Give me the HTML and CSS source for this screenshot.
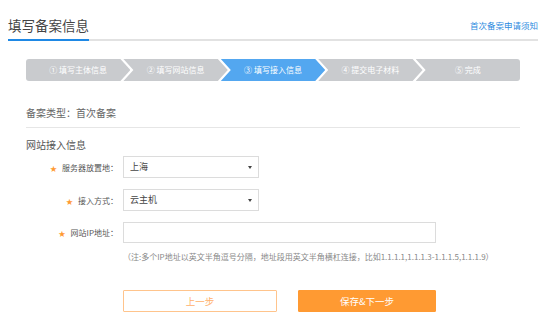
FILE: index.html
```html
<!DOCTYPE html>
<html lang="zh-CN">
<head>
    <meta charset="UTF-8">
    <title>填写备案信息</title>
    <link rel="stylesheet" href="styles.css">
</head>
<body>
    <div class="page">
        <header class="header">
            <h1>填写备案信息</h1>
            <a href="#" class="notice-link">首次备案申请须知</a>
        </header>

        <div class="steps">
            <div class="step">① 填写主体信息</div>
            <div class="step">② 填写网站信息</div>
            <div class="step active">③ 填写接入信息</div>
            <div class="step">④ 提交电子材料</div>
            <div class="step">⑤ 完成</div>
        </div>

        <div class="content">
            <div class="record-type">备案类型：首次备案</div>

            <div class="section-title">网站接入信息</div>

            <div class="form">
                <div class="form-row">
                    <label class="form-label"><span class="star">★</span>服务器放置地：</label>
                    <div class="select">上海</div>
                </div>
                <div class="form-row">
                    <label class="form-label"><span class="star">★</span>接入方式：</label>
                    <div class="select">云主机</div>
                </div>
                <div class="form-row">
                    <label class="form-label"><span class="star">★</span>网站IP地址：</label>
                    <input type="text" class="text-input">
                </div>
                <p class="form-tip">（注:多个IP地址以英文半角逗号分隔，地址段用英文半角横杠连接，比如1.1.1.1,1.1.1.3-1.1.1.5,1.1.1.9）</p>
            </div>

            <div class="actions">
                <button class="btn btn-prev">上一步</button>
                <button class="btn btn-next">保存&amp;下一步</button>
            </div>
        </div>
    </div>
</body>
</html>
```

FILE: styles.css
```css
:root {
    --blue: #1e88e5;
    --step-gray: #c9cbce;
    --step-blue: #53a7f0;
    --orange: #ff9a32;
    --text: #444;
    --muted: #666;
    --border: #dcdcdc;
}

body {
    margin: 0;
    font-family: "Noto Sans CJK SC", "Microsoft YaHei", sans-serif;
    color: var(--text);
    background: #fff;
}

.page {
    width: 553px;
}

.header {
    display: flex;
    justify-content: space-between;
    align-items: flex-end;
    margin: 0 15px 0 8px;
    padding-top: 15px;
    border-bottom: 2px solid #e2e2e2;
}

.header h1 {
    margin: 0 0 -2px 0;
    font-size: 13.5px;
    font-weight: normal;
    line-height: 20px;
    padding: 0 0 4px 0;
    border-bottom: 2px solid var(--blue);
    color: #444;
}

.notice-link {
    font-size: 8.5px;
    line-height: 12px;
    color: #2d8be0;
    text-decoration: none;
    padding-bottom: 8px;
}

.steps {
    display: flex;
    height: 22px;
    margin: 18px 33px 0 26px;
    border-radius: 3px;
    overflow: hidden;
}

.step {
    flex: 1;
    margin-left: -7px;
    background: var(--step-gray);
    color: #fff;
    font-size: 8px;
    line-height: 22px;
    text-align: center;
    clip-path: polygon(0 0, calc(100% - 10px) 0, 100% 50%, calc(100% - 10px) 100%, 0 100%, 10px 50%);
}

.step:first-child {
    margin-left: 0;
    clip-path: polygon(0 0, calc(100% - 10px) 0, 100% 50%, calc(100% - 10px) 100%, 0 100%);
}

.step:last-child {
    clip-path: polygon(0 0, 100% 0, 100% 100%, 0 100%, 10px 50%);
}

.step.active {
    background: var(--step-blue);
}

.content {
    margin: 0 33px 0 26px;
}

.record-type {
    margin-top: 25px;
    font-size: 10px;
    line-height: 14px;
    color: var(--muted);
    padding-bottom: 7px;
    border-bottom: 1px solid #e6e6e6;
}

.section-title {
    margin-top: 10px;
    font-size: 10px;
    line-height: 14px;
    color: #555;
}

.form {
    margin-top: 4px;
    display: flex;
    flex-direction: column;
    gap: 11px;
}

.form-row {
    display: flex;
    align-items: center;
    gap: 5px;
}

.form-label {
    width: 92px;
    text-align: right;
    font-size: 8px;
    color: #555;
}

.star {
    color: #ff9a32;
    font-size: 7px;
    margin-right: 5px;
}

.select {
    position: relative;
    width: 128px;
    height: 20px;
    line-height: 20px;
    padding-left: 6px;
    border: 1px solid var(--border);
    font-size: 9px;
    color: #444;
}

.select::after {
    content: "";
    position: absolute;
    right: 6px;
    top: 9px;
    border-left: 2px solid transparent;
    border-right: 2px solid transparent;
    border-top: 3px solid #444;
}

.text-input {
    width: 307px;
    height: 19px;
    margin: 0;
    padding: 0 2px;
    border: 1px solid var(--border);
    box-sizing: content-box;
}

.form-tip {
    margin: -3px 0 0 97px;
    font-size: 8px;
    line-height: 12px;
    color: #888;
    white-space: nowrap;
}

.actions {
    display: flex;
    gap: 21px;
    margin: 27px 0 0 97px;
}

.btn {
    height: 22px;
    font-family: inherit;
    font-size: 9.5px;
    border-radius: 1px;
    cursor: pointer;
}

.btn-prev {
    width: 154px;
    background: #fff;
    border: 1px solid #ffc48c;
    color: #ffb06a;
}

.btn-next {
    width: 138px;
    background: var(--orange);
    border: 1px solid var(--orange);
    color: #fff;
}
```
